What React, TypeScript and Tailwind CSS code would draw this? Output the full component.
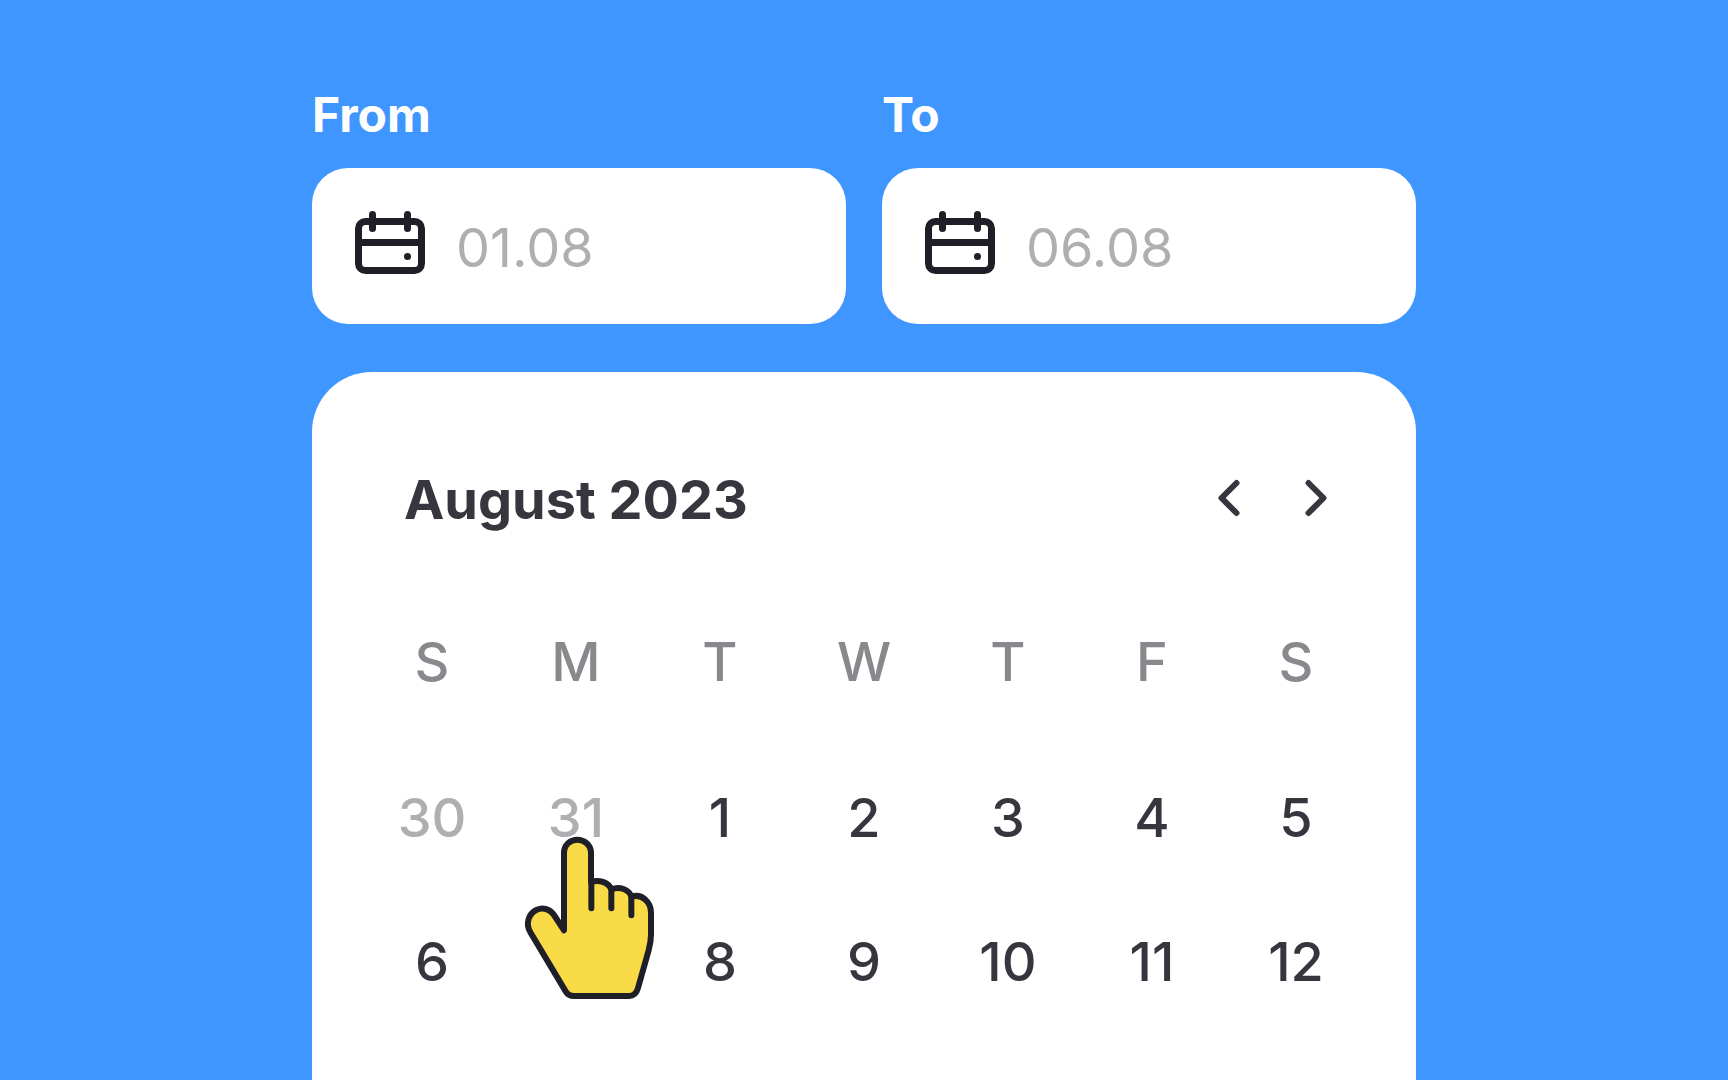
import React from "react";

type Day = { label: string; muted?: boolean; pointer?: boolean };

const weekdays = [
  { id: "sun", short: "S", name: "Sunday" },
  { id: "mon", short: "M", name: "Monday" },
  { id: "tue", short: "T", name: "Tuesday" },
  { id: "wed", short: "W", name: "Wednesday" },
  { id: "thu", short: "T", name: "Thursday" },
  { id: "fri", short: "F", name: "Friday" },
  { id: "sat", short: "S", name: "Saturday" },
];

const weeks: Day[][] = [
  [
    { label: "30", muted: true },
    { label: "31", muted: true, pointer: true },
    { label: "1" },
    { label: "2" },
    { label: "3" },
    { label: "4" },
    { label: "5" },
  ],
  [
    { label: "6" },
    { label: "7" },
    { label: "8" },
    { label: "9" },
    { label: "10" },
    { label: "11" },
    { label: "12" },
  ],
];

function CalendarIcon() {
  return (
    <svg
      className="size-[84px] shrink-0 text-[#1f1f28]"
      viewBox="0 0 24 24"
      fill="none"
      stroke="currentColor"
      strokeWidth="2"
      strokeLinecap="round"
      aria-hidden="true"
    >
      <rect x="3" y="5" width="18" height="14" rx="2" />
      <path d="M7 3v4M17 3v4M3 11h18" />
      <circle cx="17" cy="15" r="1" fill="currentColor" stroke="none" />
    </svg>
  );
}

function Chevron({ d }: { d: string }) {
  return (
    <svg
      className="size-[60px]"
      viewBox="0 0 24 24"
      fill="none"
      stroke="currentColor"
      strokeWidth="2.4"
      strokeLinecap="round"
      strokeLinejoin="round"
      aria-hidden="true"
    >
      <path d={d} />
    </svg>
  );
}

function PointingHand() {
  return (
    <svg
      className="pointer-events-none absolute top-[74px] left-[6px] z-10 h-[190px] w-[160px]"
      viewBox="0 0 480 570"
      fill="none"
      stroke="#1f1f28"
      strokeWidth="18"
      strokeLinecap="round"
      strokeLinejoin="round"
      aria-hidden="true"
    >
      <path
        fill="#f8db46"
        d="M162 331V99C162 76 180 59 202 59S243 76 243 99V185C270 178 296 188 304 208C330 198 355 208 365 230C396 220 423 246 423 278V343C423 360 420 376 416 391L384 504C380 519 370 528 357 528H192C181 528 173 524 167 514L61 337C45 310 57 281 79 270C99 261 120 267 132 285Z"
      />
      <path d="M244 184V265M304 206V265M364 228V286" />
    </svg>
  );
}

function DateField({ id, label, placeholder }: { id: string; label: string; placeholder: string }) {
  return (
    <div className="flex min-w-0 flex-col">
      <label htmlFor={id} className="mb-[25px] text-5xl leading-[56px] font-bold text-white">
        {label}
      </label>
      <div className="flex h-[156px] items-center gap-6 rounded-[36px] bg-white px-9">
        <CalendarIcon />
        <input
          id={id}
          type="text"
          placeholder={placeholder}
          className="h-20 w-full min-w-0 bg-transparent pt-0.5 text-[54px] text-[#36363f] outline-none placeholder:text-[#afafb1]"
        />
      </div>
    </div>
  );
}

export default function App() {
  return (
    <main className="flex min-h-screen flex-col items-center bg-[#3f96ff] pt-[87px] font-['Inter',sans-serif]">
      <div className="flex w-full max-w-[1104px] flex-1 flex-col">
        <div className="grid grid-cols-2 gap-9">
          <DateField id="date-from" label="From" placeholder="01.08" />
          <DateField id="date-to" label="To" placeholder="06.08" />
        </div>

        <section className="mt-12 flex-1 rounded-t-[60px] bg-white px-12 pt-12 text-[#36363f]">
          <header className="flex h-[158px] items-start justify-between pt-12 pr-[22px] pl-11">
            <h2 className="text-[54px] leading-[64px] font-bold">August 2023</h2>
            <div className="flex gap-[27px]">
              <button type="button" aria-label="Previous month">
                <Chevron d="M15 6l-6 6 6 6" />
              </button>
              <button type="button" aria-label="Next month">
                <Chevron d="M9 6l6 6-6 6" />
              </button>
            </div>
          </header>

          <table className="w-full table-fixed text-center text-[54px] leading-[64px]">
            <thead>
              <tr>
                {weekdays.map((day) => (
                  <th
                    key={day.id}
                    scope="col"
                    abbr={day.name}
                    className="h-[168px] p-0 text-center font-medium text-[#88888d]"
                  >
                    {day.short}
                  </th>
                ))}
              </tr>
            </thead>
            <tbody>
              {weeks.map((week) => (
                <tr key={week[0].label}>
                  {week.map((day) => (
                    <td key={day.label} className="relative h-36 p-0">
                      <button
                        type="button"
                        className={
                          day.muted
                            ? "h-36 w-full font-medium text-[#afafb1]"
                            : "h-36 w-full font-medium"
                        }
                      >
                        {day.label}
                      </button>
                      {day.pointer && <PointingHand />}
                    </td>
                  ))}
                </tr>
              ))}
            </tbody>
          </table>
        </section>
      </div>
    </main>
  );
}
